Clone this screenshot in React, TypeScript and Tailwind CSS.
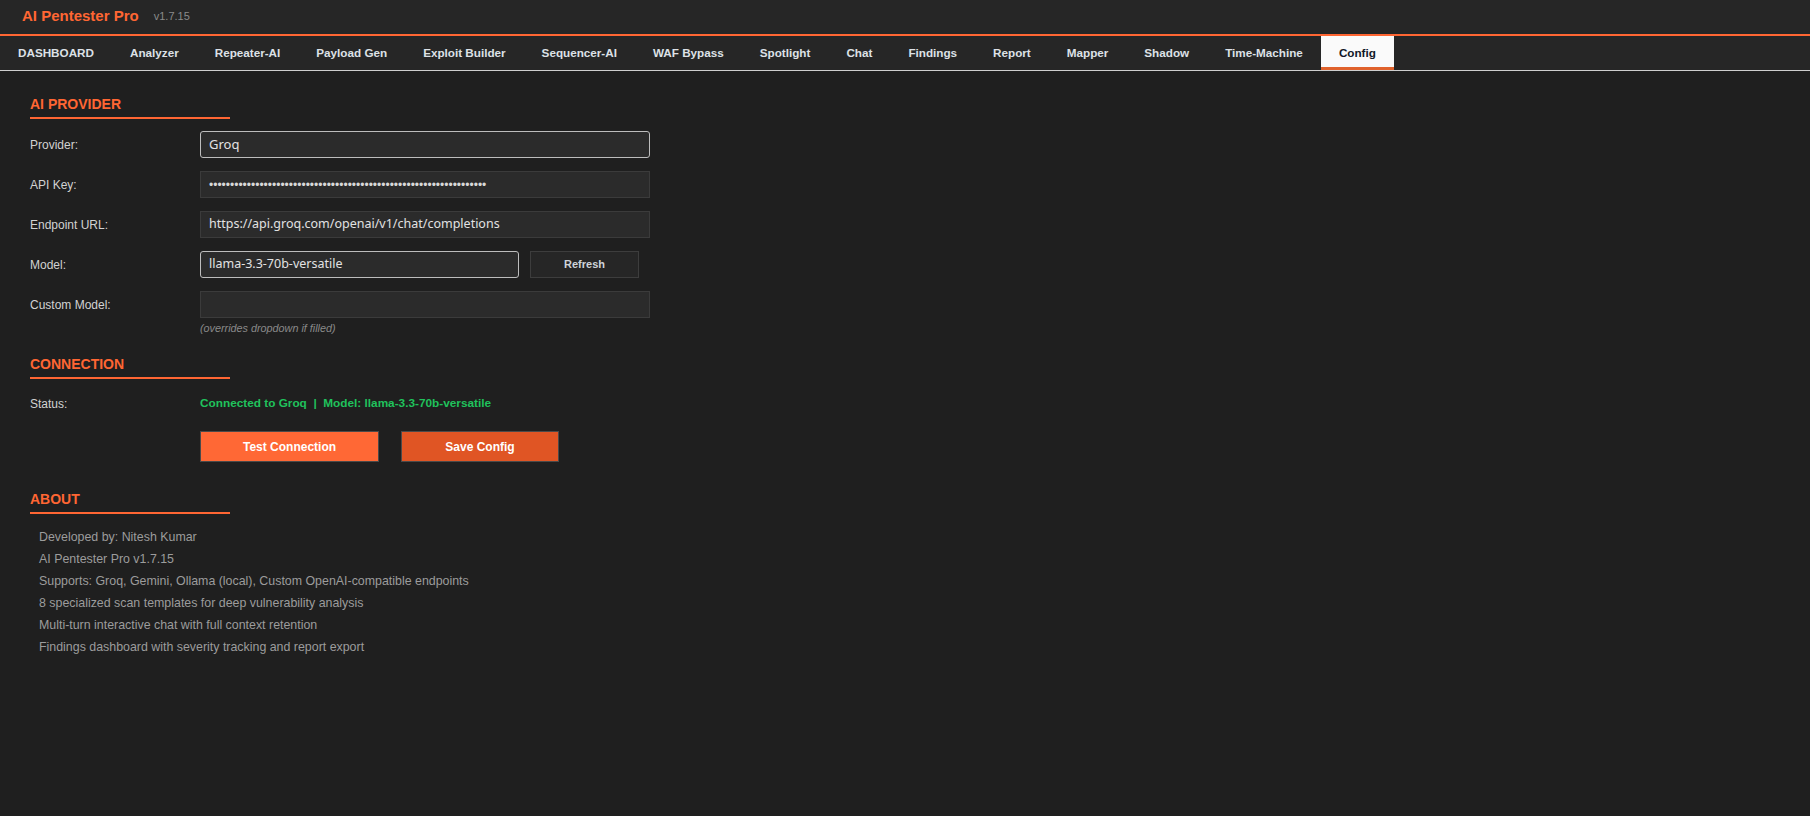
import React from "react";

const tabs = [
  "DASHBOARD",
  "Analyzer",
  "Repeater-AI",
  "Payload Gen",
  "Exploit Builder",
  "Sequencer-AI",
  "WAF Bypass",
  "Spotlight",
  "Chat",
  "Findings",
  "Report",
  "Mapper",
  "Shadow",
  "Time-Machine",
  "Config",
];

const about = [
  "Developed by: Nitesh Kumar",
  "AI Pentester Pro v1.7.15",
  "Supports: Groq, Gemini, Ollama (local), Custom OpenAI-compatible endpoints",
  "8 specialized scan templates for deep vulnerability analysis",
  "Multi-turn interactive chat with full context retention",
  "Findings dashboard with severity tracking and report export",
];

const arial = { fontFamily: '"Liberation Sans", Arial, sans-serif' };

function SectionTitle({ children }: { children: React.ReactNode }) {
  return (
    <div className="w-[200px] pb-[5px] border-b-2 border-[#ff6633] text-[14px] leading-[16px] font-bold text-[#ff6633]">
      {children}
    </div>
  );
}

function Row({ label, children }: { label: string; children: React.ReactNode }) {
  return (
    <div className="flex items-center h-[27px]">
      <div className="w-[170px] text-[12px] text-[#d2d2d2]">{label}</div>
      {children}
    </div>
  );
}

const fieldFont = { fontFamily: '"Noto Sans", "Open Sans", sans-serif' };

export default function App() {
  return (
    <div className="w-full min-h-[816px] bg-[#1f1f1f]" style={arial}>
      {/* title bar */}
      <div className="h-[36px] flex items-center pl-[22px] pb-[2px] bg-[#262626] border-b-2 border-[#ff6633]">
        <span className="text-[15px] font-bold text-[#ff6633]">AI Pentester Pro</span>
        <span className="ml-[15px] text-[11px] text-[#8a8a8a]">v1.7.15</span>
      </div>

      {/* tabs */}
      <div className="flex h-[35px] bg-[#262626] border-b border-[#cfcfcf]">
        {tabs.map((t) => {
          const active = t === "Config";
          return (
            <div
              key={t}
              className={
                active
                  ? "flex items-center px-[18px] bg-[#fafafa] text-[#111827] text-[11.7px] font-bold border-b-[3px] border-[#e0622c] pt-[3px]"
                  : "flex items-center px-[18px] text-[#dde1e6] text-[11.7px] font-bold"
              }
            >
              {t}
            </div>
          );
        })}
      </div>

      {/* content */}
      <div className="pl-[30px] pt-[25px]">
        <SectionTitle>AI PROVIDER</SectionTitle>

        <div className="mt-[12px] flex flex-col gap-[13px]">
          <Row label="Provider:">
            <div
              className="w-[450px] h-[27px] flex items-center pl-[8px] bg-[#2b2b2b] border border-[#bdbdbd] rounded-[3px] text-[13px] text-[#e2e2e2]"
              style={fieldFont}
            >
              Groq
            </div>
          </Row>
          <Row label="API Key:">
            <div className="w-[450px] h-[27px] flex items-center pl-[8px] bg-[#2b2b2b] border border-[#3b3b3b] text-[12px] text-[#d8d8d8]">
              {"•".repeat(66)}
            </div>
          </Row>
          <Row label="Endpoint URL:">
            <div
              className="w-[450px] h-[27px] flex items-center pl-[8px] bg-[#2b2b2b] border border-[#3b3b3b] text-[12.5px] text-[#e2e2e2]"
              style={fieldFont}
            >
              https://api.groq.com/openai/v1/chat/completions
            </div>
          </Row>
          <Row label="Model:">
            <div
              className="w-[319px] h-[27px] flex items-center pl-[8px] bg-[#2b2b2b] border border-[#bdbdbd] rounded-[3px] text-[12.5px] text-[#e2e2e2]"
              style={fieldFont}
            >
              llama-3.3-70b-versatile
            </div>
            <button className="ml-[11px] w-[109px] h-[27px] bg-[#262626] border border-[#3d3d3d] text-[11px] font-bold text-[#cfd4da]">
              Refresh
            </button>
          </Row>
          <Row label="Custom Model:">
            <div className="w-[450px] h-[27px] bg-[#2b2b2b] border border-[#3b3b3b]" />
          </Row>
        </div>
        <div className="ml-[170px] mt-[4px] text-[10.8px] leading-[13px] italic text-[#8a8a8a]">
          (overrides dropdown if filled)
        </div>

        <div className="mt-[21px]">
          <SectionTitle>CONNECTION</SectionTitle>
        </div>
        <div className="mt-[11px]">
          <Row label="Status:">
            <span className="text-[11.8px] font-bold text-[#20c25c] whitespace-pre">
              Connected to Groq  |  Model: llama-3.3-70b-versatile
            </span>
          </Row>
        </div>
        <div className="ml-[170px] mt-[14px] flex gap-[22px]">
          <button className="w-[179px] h-[31px] bg-[#ff6835] border border-[#4a4a4a] text-[12px] font-bold text-white">
            Test Connection
          </button>
          <button className="w-[158px] h-[31px] bg-[#e05524] border border-[#4a4a4a] text-[12px] font-bold text-white">
            Save Config
          </button>
        </div>

        <div className="mt-[29px]">
          <SectionTitle>ABOUT</SectionTitle>
        </div>
        <div className="mt-[12px] pl-[9px] flex flex-col">
          {about.map((a) => (
            <div key={a} className="text-[12.4px] leading-[22px] text-[#9c9c9c]">
              {a}
            </div>
          ))}
        </div>
      </div>
    </div>
  );
}
